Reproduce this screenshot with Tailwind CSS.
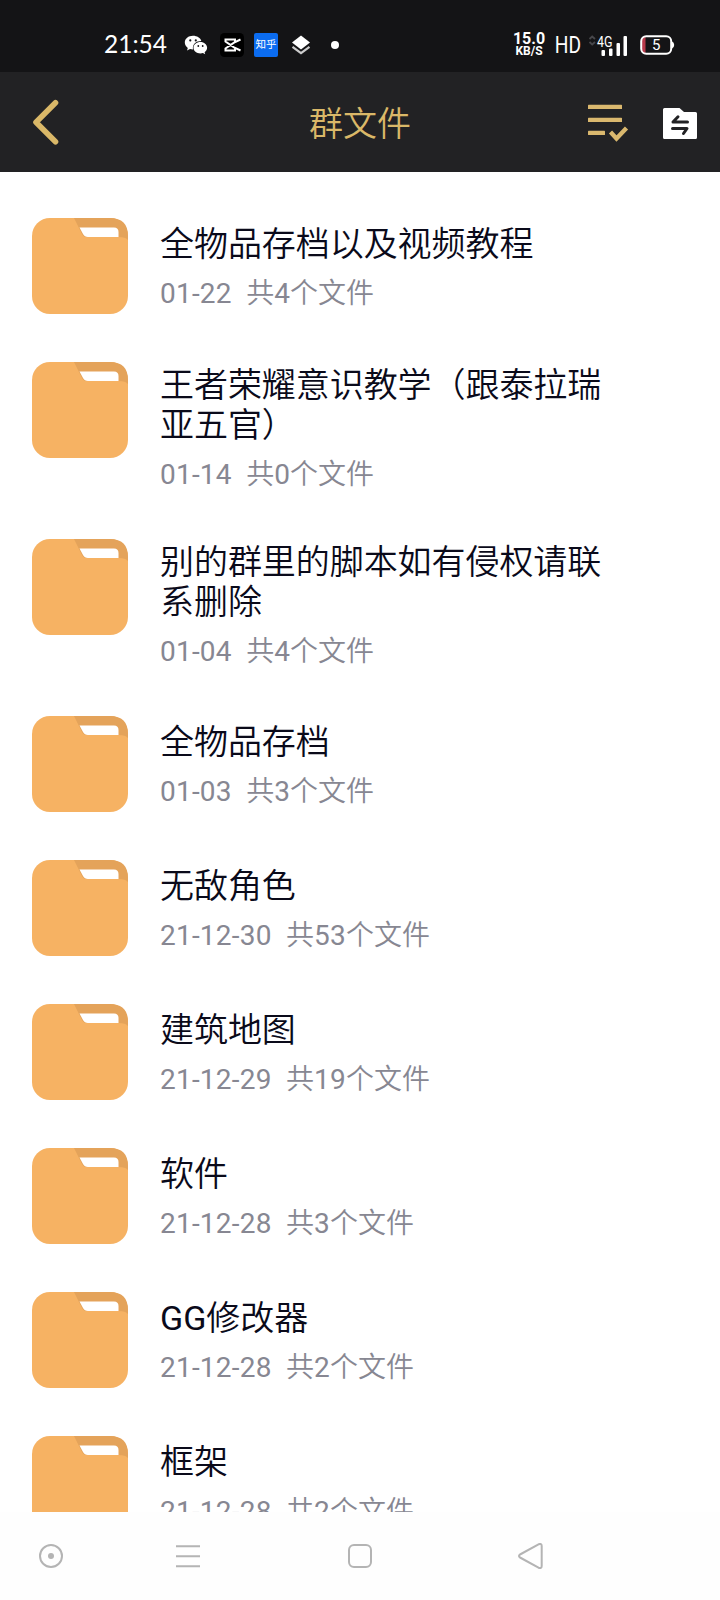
<!DOCTYPE html>
<html lang="zh-CN">
<head>
<meta charset="utf-8">
<title>群文件</title>
<script src="https://cdn.jsdelivr.net/npm/@tailwindcss/browser@4"></script>
</head>
<body class="bg-white">
<div class="flex h-[1600px] w-[720px] flex-col overflow-hidden bg-white font-['Roboto','Noto_Sans_CJK_SC',sans-serif]">

  <!-- Status bar -->
  <div class="flex h-[72px] shrink-0 items-center bg-[#141416] pt-[18px] text-white">
    <div class="ml-[104px] w-[80px] pb-[2px] text-[24.500px] leading-[52px] font-['Lato','Noto_Sans_CJK_SC',sans-serif]">21:54</div>
    <svg class="w-[24px] h-[20px] shrink-0" viewBox="0 0 24 20">
      <path fill="#fff" d="M9 .8C4.400.8.8 3.700.8 7.600c0 2.200 1.200 4 3 5.300L3 15.500l3-1.500c1 .3 2 .4 3 .4C8.200 9.500 12 6 17.300 6 16.500 3 13 .8 9 .8z"/>
      <path fill="#fff" d="M16.500 7c-4 0-7 2.600-7 5.700s3 5.700 7 5.700c.8 0 1.700-.1 2.400-.4l2.300 1.300-.6-2.100c1.500-1.100 2.500-2.700 2.500-4.500 0-3.100-3-5.700-6.600-5.700z"/>
      <g fill="#141416"><circle cx="6.300" cy="5.400" r="1.100"/><circle cx="11.800" cy="5.400" r="1.100"/><circle cx="14.300" cy="11" r=".9"/><circle cx="18.700" cy="11" r=".9"/></g>
    </svg>
    <svg class="ml-[12px] w-[24px] h-[24px] shrink-0" viewBox="0 0 24 24">
      <rect width="24" height="24" rx="4.500" fill="#000"/>
      <path fill="none" stroke="#fff" stroke-width="2" d="M20.500 6.500 14 9.700 5.500 15.500V17.500H15V15.200M20.500 17.500 14 14.300 5.500 8.500V6.500H15V8.800"/>
    </svg>
    <div class="ml-[10px] h-[24px] w-[24px] shrink-0 rounded-[2px] bg-[#0b6cf0] text-center text-[10.500px] leading-[24px]">知乎</div>
    <svg class="ml-[13px] w-[20px] h-[20px] shrink-0" viewBox="0 0 20 20">
      <path fill="#fff" d="M10 .5 19 7.500 10 14.500 1 7.500z"/><path fill="none" stroke="#ccc" stroke-width="2.200" d="m1.500 11.800 8.500 6.400 8.500-6.400"/>
    </svg>
    <div class="ml-[20px] h-[8px] w-[8px] rounded-full bg-white"></div>
    <div class="ml-[170px] w-[40px] text-center font-bold">
      <div class="text-[16px] leading-[13px]">15.0</div>
      <div class="text-[12px] leading-[13px]">KB/S</div>
    </div>
    <div class="ml-[1px] w-[36px] pb-[1px] text-center text-[24px] leading-[26px] origin-center scale-x-80">HD</div>
    <svg class="ml-[1px] w-[42px] h-[24px] shrink-0" viewBox="0 0 42 24">
      <path fill="none" stroke="#47474b" stroke-width="1.800" d="m2.500 7 2.700-2.500L8 7M2.500 10l2.700 2.500L8 10" transform="translate(0 -1)"/>
      <g fill="#fff"><rect x="14.500" y="17" width="3.500" height="6" rx="1"/><rect x="22" y="15.500" width="3.500" height="7.500" rx="1"/><rect x="29.500" y="10" width="3.500" height="13" rx="1"/><rect x="36.500" y="3" width="3.500" height="20" rx="1"/></g>
      <text x="10" y="13.500" fill="#fff" font-size="14" font-family="Roboto" textLength="15.500" lengthAdjust="spacingAndGlyphs">4G</text>
    </svg>
    <svg class="ml-[11px] w-[35px] h-[20px] shrink-0" viewBox="0 0 35 20">
      <path fill="#b83a4b" d="M2 5Q2 2 5.500 2V18Q2 18 2 15z"/>
      <rect x="1.200" y="1.200" width="30" height="17.600" rx="5" fill="none" stroke="#fff" stroke-width="2"/>
      <path fill="#fff" d="M32 6.500q2.200.8 2.200 3.500T32 13.500z"/>
      <text x="16.300" y="15.300" fill="#fff" font-size="15" text-anchor="middle" font-family="Roboto">5</text>
    </svg>
  </div>

  <!-- Title bar -->
  <div class="flex h-[100px] shrink-0 items-center bg-[#222224]">
    <svg class="ml-[31px] w-[30px] h-[48px] shrink-0" viewBox="0 0 30 48">
      <path fill="none" stroke="#dab868" stroke-width="5.600" stroke-linecap="round" stroke-linejoin="round" d="M24.500 4.700 5 24.200l19.500 19.500"/>
    </svg>
    <div class="ml-[248px] w-[102px] pt-[3px] text-[34px] leading-[40px] font-[350] text-[#dab868]">群文件</div>
    <svg class="ml-[177px] w-[42px] h-[40px] shrink-0" viewBox="0 0 42 40">
      <g fill="#dab86e"><rect y="2.800" width="34" height="4.300" rx=".6"/><rect y="15.800" width="34" height="4.300" rx=".6"/><rect y="28.800" width="17" height="4.300" rx=".6"/></g>
      <path fill="none" stroke="#dab86e" stroke-width="4.300" d="m22.500 30 6 6.500L38.500 26"/>
    </svg>
    <svg class="mt-[3px] ml-[33px] w-[34px] h-[32px] shrink-0" viewBox="0 0 34 32">
      <path fill="#fff" d="M1.500 0H16.500L21 4H32.500Q34 4 34 5.500V29.500Q34 31 32.500 31H1.500Q0 31 0 29.500V1.500Q0 0 1.500 0z"/>
      <path fill="none" stroke="#222224" stroke-width="3" stroke-linecap="round" stroke-linejoin="round" d="M24.500 14H10L15 8.800M9.500 20.500H24L20.500 25.500"/>
    </svg>
  </div>

  <!-- Folder list -->
  <div id="list" class="h-[1340px] shrink-0 overflow-hidden pt-[46px]"></div>

  <!-- Navigation bar -->
  <div class="flex h-[88px] shrink-0 items-start bg-[#fefefe] pt-[31px]">
    <svg class="ml-[38px] w-[26px] h-[26px]" viewBox="0 0 26 26" fill="none" stroke="#b4b4b4" stroke-width="2"><circle cx="13" cy="13" r="11"/><circle cx="13" cy="13" r="3" fill="#b4b4b4" stroke="none"/></svg>
    <svg class="ml-[112px] w-[24px] h-[26px]" viewBox="0 0 24 26" fill="none" stroke="#b4b4b4" stroke-width="2"><path d="M0 3.300h24M0 13.300h24M0 23.300h24"/></svg>
    <svg class="ml-[147px] w-[26px] h-[26px]" viewBox="0 0 26 26" fill="none" stroke="#b4b4b4" stroke-width="2"><rect x="2" y="2" width="22" height="22" rx="5"/></svg>
    <svg class="ml-[144px] w-[28px] h-[28px]" viewBox="0 0 28 28" fill="none" stroke="#b4b4b4" stroke-width="2" stroke-linejoin="round"><path d="M3 11.500 21.500 1.300Q24.700 0 24.700 3V23Q24.700 26 21.500 24.700L3 14.500Q1 13 3 11.500z"/></svg>
  </div>
</div>

<template id="row">
  <div class="flex items-start pl-[32px]">
    <svg class="w-[96px] h-[96px] shrink-0" viewBox="0 0 96 96">
      <rect width="96" height="96" rx="18" fill="#f6b263"/>
      <path fill="#e4a35a" d="M42 0H78Q96 0 96 18V22Q94 19 86 19H54Q51 19 49 14z"/>
      <path fill="#fff" d="M47.500 9.500H82Q86.500 9.500 86.500 14V19H56Q52.500 19 51 16z"/>
    </svg>
    <div class="ml-[32px] w-[450px]">
      <div data-name class="text-[34px] leading-[40px] font-[350] tracking-[-0.060px] whitespace-pre text-[#0a0a1a]"></div>
      <div data-info class="mt-[10px] text-[28px] leading-[40px] whitespace-pre font-[350] text-[#878792]"></div>
    </div>
  </div>
</template>
<script>
  const folders = [
    ['全物品存档以及视频教程', '01-22  共4个文件'],
    ['王者荣耀意识教学（跟泰拉瑞\n亚五官）', '01-14  共0个文件'],
    ['别的群里的脚本如有侵权请联\n系删除', '01-04  共4个文件'],
    ['全物品存档', '01-03  共3个文件'],
    ['无敌角色', '21-12-30  共53个文件'],
    ['建筑地图', '21-12-29  共19个文件'],
    ['软件', '21-12-28  共3个文件'],
    ['GG修改器', '21-12-28  共2个文件'],
    ['框架', '21-12-28  共2个文件']
  ];
  // Latin letters and digits are set one weight heavier than the Chinese text
  const latin = (text, spacing) =>
    text.replace(/[A-Za-z0-9\- ]+/g, run => `<span class="font-normal ${spacing}">${run}</span>`);
  const list = document.getElementById('list');
  for (const [name, info] of folders) {
    const row = document.getElementById('row').content.firstElementChild.cloneNode(true);
    const long = name.includes('\n');
    row.classList.add(long ? 'h-[177px]' : 'h-[144px]');
    row.lastElementChild.classList.add(long ? 'pt-[3px]' : 'pt-[6px]');
    row.querySelector('[data-name]').innerHTML = latin(name, 'tracking-normal');
    row.querySelector('[data-info]').innerHTML = latin(info, 'tracking-[0.220px]');
    list.append(row);
  }
</script>
</body>
</html>
